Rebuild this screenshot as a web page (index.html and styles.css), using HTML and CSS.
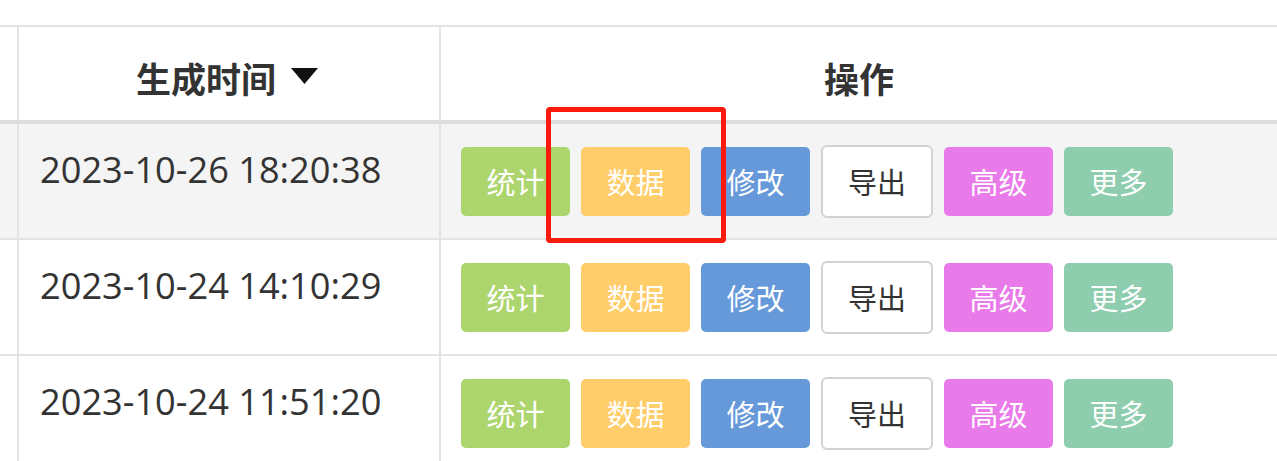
FILE: index.html
```html
<!DOCTYPE html>
<html lang="zh-CN">
<head>
<meta charset="utf-8">
<title>列表</title>
<link rel="stylesheet" href="styles.css">
</head>
<body>
<div class="sheet">
  <div class="row head">
    <div class="cell c0"></div>
    <div class="cell c1 th sortable">生成时间<svg class="caret" width="27" height="16" viewBox="0 0 27 16"><polygon points="0,0 27,0 13.5,16" fill="#111"/></svg></div>
    <div class="cell c2 th">操作</div>
  </div>
  <div class="row body hover">
    <div class="cell c0"></div>
    <div class="cell c1 date">2023-10-26 18:20:38</div>
    <div class="cell c2 actions">
      <button class="btn green">统计</button>
      <button class="btn yellow">数据</button>
      <button class="btn blue">修改</button>
      <button class="btn plain">导出</button>
      <button class="btn pink">高级</button>
      <button class="btn mint">更多</button>
    </div>
  </div>
  <div class="row body">
    <div class="cell c0"></div>
    <div class="cell c1 date">2023-10-24 14:10:29</div>
    <div class="cell c2 actions">
      <button class="btn green">统计</button>
      <button class="btn yellow">数据</button>
      <button class="btn blue">修改</button>
      <button class="btn plain">导出</button>
      <button class="btn pink">高级</button>
      <button class="btn mint">更多</button>
    </div>
  </div>
  <div class="row body">
    <div class="cell c0"></div>
    <div class="cell c1 date">2023-10-24 11:51:20</div>
    <div class="cell c2 actions">
      <button class="btn green">统计</button>
      <button class="btn yellow">数据</button>
      <button class="btn blue">修改</button>
      <button class="btn plain">导出</button>
      <button class="btn pink">高级</button>
      <button class="btn mint">更多</button>
    </div>
  </div>
  <div class="mark"></div>
</div>
</body>
</html>
```

FILE: styles.css
```css
html, body {
  margin: 0;
  padding: 0;
  background: #fff;
  overflow: hidden;
}

.sheet {
  position: relative;
  padding-top: 25px;
  font-family: "Open Sans", "Noto Sans CJK SC", sans-serif;
  color: #333;
}

.row {
  display: grid;
  grid-template-columns: 17px 422px 1fr;
  border-bottom: 2px solid #e3e3e3;
}

.head {
  border-top: 2px solid #e3e3e3;
  border-bottom: 4px solid #dddddd;
  height: 93px;
}

.body {
  height: 114px;
}

.hover {
  background: #f4f4f4;
}

.cell + .cell {
  border-left: 2px solid #e3e3e3;
}

.th {
  display: flex;
  align-items: center;
  justify-content: center;
  font-family: "Noto Sans CJK SC", sans-serif;
  font-weight: bold;
  font-size: 35px;
  padding-top: 8px;
}

.sortable {
  padding-right: 4px;
}

.caret {
  margin-left: 15px;
  margin-top: -4px;
}

.date {
  padding: 18px 0 0 21px;
  font-size: 36.2px;
  line-height: 54px;
  white-space: nowrap;
}

.actions {
  display: flex;
  align-items: center;
  gap: 11px;
  padding-left: 20px;
}

.btn {
  box-sizing: border-box;
  width: 109px;
  height: 69px;
  border: none;
  border-radius: 5px;
  padding: 0;
  font-family: "Noto Sans CJK SC", sans-serif;
  font-size: 29px;
  color: #fff;
  flex: none;
}

.green { background: #acd56e; }
.yellow { background: #ffcd69; }
.blue { background: #6699d9; }
.pink { background: #e97ae9; }
.mint { background: #8fcdaf; }

.plain {
  width: 112px;
  height: 73px;
  background: #fff;
  border: 2px solid #d2d2d2;
  border-radius: 6px;
  color: #333;
}

.mark {
  position: absolute;
  left: 546px;
  top: 107px;
  width: 170px;
  height: 126px;
  border: 5px solid #fb1a0c;
  border-radius: 4px;
}
```
